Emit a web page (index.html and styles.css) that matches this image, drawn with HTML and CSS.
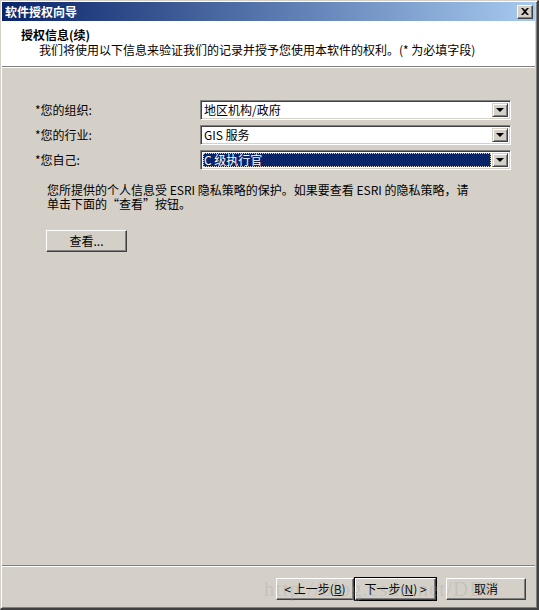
FILE: index.html
```html
<!DOCTYPE html>
<html lang="zh-CN">
<head>
<meta charset="utf-8">
<title>软件授权向导</title>
<link rel="stylesheet" href="styles.css">
</head>
<body>
<div class="window">
  <div class="titlebar">
    <span class="title">软件授权向导</span>
    <span class="close"><svg width="8" height="7" viewBox="0 0 8 7"><path d="M0 0h2l2 2 2-2h2L5 3.5 8 7H6L4 5 2 7H0l3-3.5z" fill="#000"/></svg></span>
  </div>
  <div class="header">
    <div class="h-title">授权信息(续)</div>
    <div class="h-sub">我们将使用以下信息来验证我们的记录并授予您使用本软件的权利。(* 为必填字段)</div>
  </div>
  <div class="content">
    <div class="form">
      <label class="lbl">*您的组织:</label>
      <div class="combo"><span class="val">地区机构/政府</span><span class="drop"><i class="arrow"></i></span></div>
      <label class="lbl">*您的行业:</label>
      <div class="combo"><span class="val">GIS 服务</span><span class="drop"><i class="arrow"></i></span></div>
      <label class="lbl">*您自己:</label>
      <div class="combo focus"><span class="val sel">C 级执行官</span><span class="drop"><i class="arrow"></i></span></div>
    </div>
    <p class="note">您所提供的个人信息受 ESRI 隐私策略的保护。如果要查看 ESRI 的隐私策略，请<br>单击下面的“查看”按钮。</p>
    <button class="btn view">查看...</button>
  </div>
  <div class="footer">
    <button class="btn back">&lt; 上一步(<u>B</u>)</button>
    <button class="btn default">下一步(<u>N</u>) &gt;</button>
    <button class="btn cancel">取消</button>
    <span class="watermark">http://blog.csdn.net/DBC</span>
  </div>
</div>
</body>
</html>
```

FILE: styles.css
```css
html, body {
  margin: 0;
  padding: 0;
  background: #d4d0c8;
}
body {
  font-family: "Noto Sans CJK SC", "Liberation Sans", sans-serif;
  font-size: 12px;
  color: #000;
}
.window {
  width: 539px;
  height: 610px;
  box-sizing: border-box;
  border-style: solid;
  border-width: 1px 2px 2px 1px;
  border-color: #d4d0c8 #404040 #404040 #d4d0c8;
  box-shadow: inset 1px 1px 0 #fff, inset -1px -1px 0 #808080;
  padding: 1px 2px 1px 1px;
  display: flex;
  flex-direction: column;
  position: relative;
}
.titlebar {
  height: 19px;
  background: linear-gradient(to right, #0a246a, #a6caf0);
  display: flex;
  align-items: center;
  justify-content: space-between;
  padding: 0 2px 0 3px;
}
.title {
  color: #fff;
  font-weight: bold;
  font-size: 12px;
  line-height: 19px;
}
.close {
  width: 16px;
  height: 14px;
  box-sizing: border-box;
  background: #d4d0c8;
  border: 1px solid;
  border-color: #fff #404040 #404040 #fff;
  box-shadow: inset -1px -1px 0 #808080;
  display: flex;
  align-items: center;
  justify-content: center;
}
.header {
  background: #fff;
  height: 46px;
  border-bottom: 1px solid #808080;
  box-shadow: 0 1px 0 #fff;
  padding: 7px 0 0 19px;
  box-sizing: border-box;
  line-height: 14px;
}
.h-title {
  font-weight: bold;
  font-size: 12px;
}
.h-sub {
  padding-left: 18px;
  font-size: 12px;
  margin-top: 1px;
}
.content {
  flex: 1;
  padding: 33px 0 0 33px;
}
.form {
  display: grid;
  grid-template-columns: 165px 311px;
  row-gap: 5px;
  align-items: center;
}
.lbl {
  font-size: 12px;
  line-height: 20px;
}
.combo {
  height: 20px;
  box-sizing: border-box;
  background: #fff;
  border: 1px solid;
  border-color: #808080 #fff #fff #808080;
  box-shadow: inset 1px 1px 0 #404040, inset -1px -1px 0 #d4d0c8;
  display: flex;
  align-items: stretch;
  padding: 2px;
}
.val {
  flex: 1;
  line-height: 14px;
  padding-left: 1px;
  font-size: 12px;
}
.val.sel {
  background: #0a246a;
  color: #fff;
  outline: 1px dotted #d4d0c8;
  outline-offset: -1px;
  margin-right: 1px;
}
.drop {
  width: 16px;
  box-sizing: border-box;
  background: #d4d0c8;
  border: 1px solid;
  border-color: #d4d0c8 #404040 #404040 #d4d0c8;
  box-shadow: inset 1px 1px 0 #fff, inset -1px -1px 0 #808080;
  display: flex;
  align-items: center;
  justify-content: center;
}
.arrow {
  width: 0;
  height: 0;
  border-left: 4px solid transparent;
  border-right: 4px solid transparent;
  border-top: 4px solid #000;
}
.note {
  margin: 13px 0 0 12px;
  line-height: 14px;
  font-size: 12px;
}
.btn {
  font-family: "Noto Sans CJK SC", "Liberation Sans", sans-serif;
  font-size: 12px;
  color: #000;
  height: 22px;
  width: 79px;
  padding: 0;
  background: #d4d0c8;
  border: 1px solid;
  border-color: #fff #404040 #404040 #fff;
  box-shadow: inset -1px -1px 0 #808080;
  line-height: 18px;
}
.btn u { text-decoration: underline; }
.view {
  margin: 19px 0 0 11px;
  width: 81px;
}
.footer {
  height: 42px;
  box-sizing: border-box;
  border-top: 1px solid #808080;
  box-shadow: inset 0 1px 0 #fff;
  display: flex;
  align-items: flex-start;
  justify-content: flex-end;
  padding: 12px 9px 0 0;
  position: relative;
}
.footer .back {
  width: 78px;
}
.footer .default {
  width: 81px;
  outline: 1px solid #000;
  outline-offset: 0;
  border-color: #fff #404040 #404040 #fff;
  margin-left: 1px;
}
.footer .cancel {
  width: 80px;
  margin-left: 10px;
}
.watermark {
  position: absolute;
  left: 262px;
  top: 11px;
  font-family: "Liberation Serif", serif;
  font-size: 21px;
  letter-spacing: 1px;
  color: rgba(160, 160, 160, 0.3);
  pointer-events: none;
  white-space: nowrap;
}
```
